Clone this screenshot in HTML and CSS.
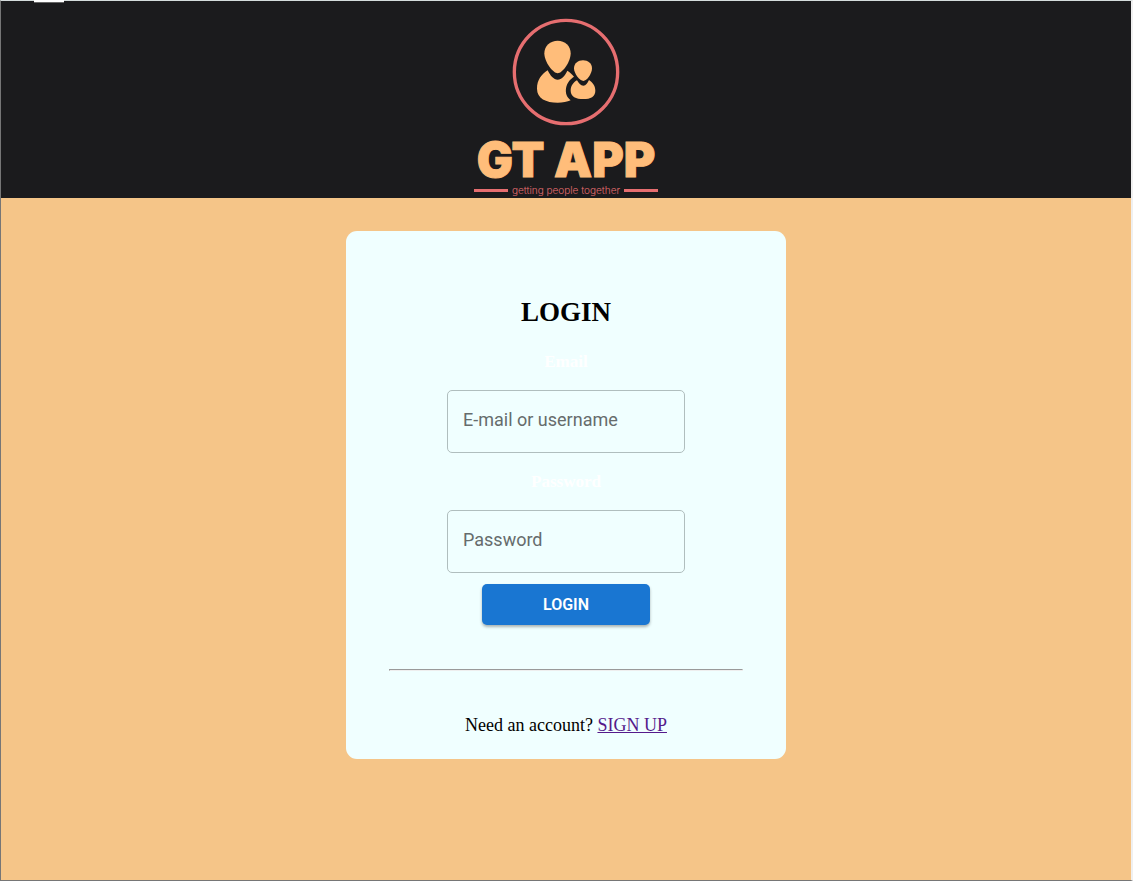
FILE: index.html
```
<!DOCTYPE html>
<html lang="en">
<head>
<meta charset="utf-8">
<meta name="viewport" content="width=device-width, initial-scale=1">
<title>GT App - Login</title>
<link rel="stylesheet" href="styles.css">
</head>
<body>
<div class="page">
  <span class="tab-mark"></span>
  <header class="header">
    <svg class="logo-icon" viewBox="156 24 324 324" aria-hidden="true">
      <circle cx="318" cy="186" r="155" fill="none" stroke="#e66e70" stroke-width="10"/>
      <g fill="#ffbd7a">
        <path d="M293 190C279 190 253 156 253 130C253 107 271 92 293 92C315 92 332 107 332 130C332 156 307 190 293 190Z"/>
        <path d="M263 181C245 192 231 210 231 236C231 265 258 278 293 278C308 278 322 275 332 271C320 262 316 250 318 235C321 218 330 208 342 200C336 193 330 187 322 182C314 198 305 209 293 209C281 209 271 198 263 181Z"/>
        <path d="M370 213C360 213 342 192 342 175C342 160 354 151 369 151C384 151 396 160 396 175C396 192 380 213 370 213Z"/>
        <path d="M351 211C340 217 332 228 332 242C332 260 348 267 370 267C392 267 406 260 406 242C406 228 398 217 387 210C382 220 378 227 370 227C362 227 356 220 351 211Z"/>
      </g>
    </svg>
    <div class="wordmark">GT APP</div>
    <div class="tagline">getting people together</div>
  </header>
  <main class="main">
    <form class="card">
      <h1 class="title">LOGIN</h1>
      <label class="label" for="email">Email</label>
      <input class="field" id="email" type="text" placeholder="E-mail or username">
      <label class="label" for="password">Password</label>
      <input class="field" id="password" type="password" placeholder="Password">
      <button class="submit" type="submit">LOGIN</button>
      <hr class="divider">
      <p class="signup">Need an account? <a class="signup-link" href="#">SIGN UP</a></p>
    </form>
  </main>
</div>
</body>
</html>
```
FILE: styles.css
```
* {
  box-sizing: border-box;
}

body {
  margin: 0;
  font-family: "Liberation Serif", serif;
}

.page {
  position: relative;
  min-height: 100vh;
  border-style: solid;
  border-width: 1px 2px 1px 1px;
  border-color: #d5dcdc #f0f0f0 #767676 #767676;
  background: #f5c588;
}

.tab-mark {
  position: absolute;
  top: -1px;
  left: 33px;
  width: 30px;
  height: 3px;
  background: #fff;
  border-bottom: 1px solid #666;
}

.header {
  display: flex;
  flex-direction: column;
  align-items: center;
  padding: 17px 0 2px;
  background: #1b1b1d;
}

.logo-icon {
  width: 108px;
  height: 108px;
}

.wordmark {
  margin-top: 10px;
  font: 900 48px/48px Inter, sans-serif;
  color: #ffbd7a;
  -webkit-text-stroke: 1px #ffbd7a;
}

.tagline {
  display: flex;
  align-items: center;
  gap: 4px;
  width: 184px;
  font: 300 10px/12px Inter, sans-serif;
  white-space: nowrap;
  color: #e66e70;
}

.tagline::before,
.tagline::after {
  content: "";
  flex: 1;
  height: 3px;
  background: #e66e70;
}

.main {
  display: flex;
  justify-content: center;
  padding: 33px 0;
}

.card {
  display: flex;
  flex-direction: column;
  align-items: center;
  width: 39%;
  min-width: 320px;
  padding: 65px 43px 23px;
  border-radius: 11px;
  background: #f0ffff;
}

.title {
  margin: 0 0 24px;
  font-size: 27px;
  line-height: 32px;
}

.label {
  font-size: 17px;
  font-weight: 700;
  line-height: 20px;
  color: #fff;
}

.field {
  width: 238px;
  height: 63px;
  margin: 18px 0 19px;
  padding: 0 15px 4px;
  border: 1px solid #b0bebe;
  border-radius: 5px;
  background: transparent;
  font: 400 18px Roboto, sans-serif;
  color: #222;
}

.field::placeholder {
  color: #666c6c;
  opacity: 1;
}

.submit {
  width: 168px;
  height: 41px;
  margin-top: -8px;
  border: 0;
  border-radius: 5px;
  background: #1976d2;
  box-shadow: 0 2px 3px rgba(0, 0, 0, 0.3);
  font: 600 16px Roboto, sans-serif;
  color: #fff;
}

.divider {
  width: 100%;
  margin: 44px 0 43px;
}

.signup {
  margin: 0;
  font-size: 18px;
  line-height: 22px;
}

.signup-link {
  color: #551a8b;
}
```
